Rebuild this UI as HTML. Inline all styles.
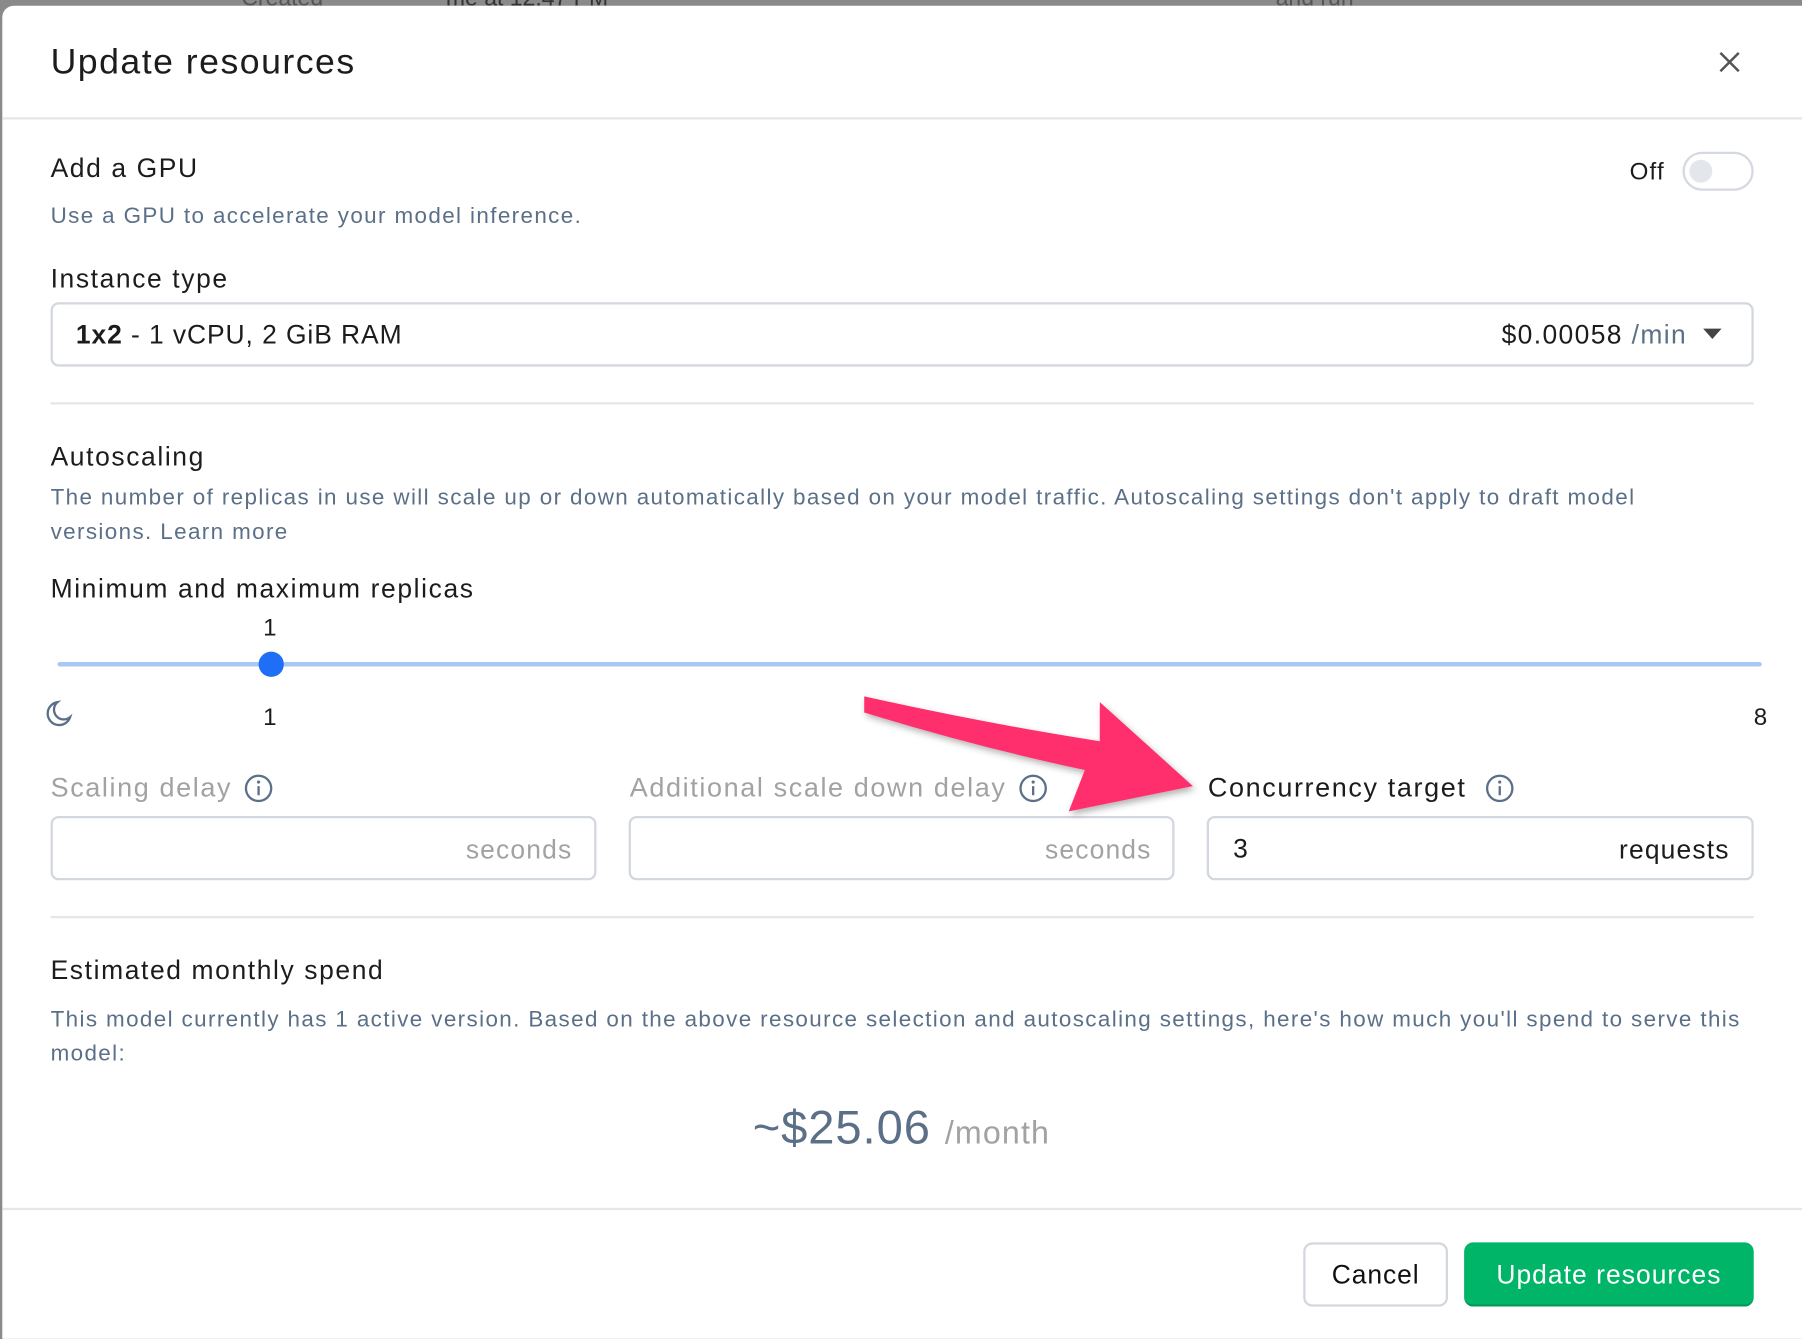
<!DOCTYPE html>
<html><head><meta charset="utf-8"><style>
html,body{margin:0;padding:0;width:1802px;height:1320px;overflow:hidden;background:#8a8a8a;font-family:"Liberation Sans",sans-serif;}
#w{position:absolute;left:0;top:0;width:1568px;height:1149px;transform:scale(1.14923);transform-origin:0 0;}
.a{position:absolute;white-space:nowrap;}
.modal{position:absolute;left:2px;top:5px;width:1580px;height:1160px;background:#fff;border-radius:10px 0 0 0;}
.hr{position:absolute;height:2px;background:#e6e6e6;}
.h{font-size:23px;color:#1c1c1c;letter-spacing:1.4px;}
.d{font-size:19.5px;color:#5b7088;letter-spacing:1.2px;}
.box{position:absolute;border:2px solid #d3d7de;border-radius:7px;box-sizing:border-box;background:#fff;}
.lab{font-size:23.5px;letter-spacing:1.4px;}
</style></head><body><div id="w">
<div class="a" style="left:210px;top:-12px;font-size:20px;color:#555">Created</div>
<div class="a" style="left:388px;top:-12px;font-size:20px;color:#333">me at 12:47 PM</div>
<div class="a" style="left:1110px;top:-12px;font-size:20px;color:#555">and run</div>
<div class="modal"></div>
<div class="a" style="left:44px;top:36px;font-size:31px;color:#1c1c1c;letter-spacing:1.3px">Update resources</div>
<svg class="a" style="left:1494px;top:43px" width="22" height="22" viewBox="0 0 22 22"><path d="M3 3L19 19M19 3L3 19" stroke="#555" stroke-width="2.2"/></svg>
<div class="hr" style="left:2px;top:102px;width:1566px"></div>
<div class="a h" style="left:44px;top:133px">Add a GPU</div>
<div class="a" style="left:1418px;top:138px;font-size:21px;color:#1c1c1c;letter-spacing:1px">Off</div>
<div class="a" style="left:1464px;top:132px;width:58px;height:30px;border:2px solid #d5d9e0;border-radius:17px"></div>
<div class="a" style="left:1470px;top:139px;width:20px;height:20px;border-radius:50%;background:#e3e6eb"></div>
<div class="a d" style="left:44px;top:177px">Use a GPU to accelerate your model inference.</div>
<div class="a h" style="left:44px;top:229px">Instance type</div>
<div class="box" style="left:44px;top:263px;width:1482px;height:56px"></div>
<div class="a" style="left:66px;top:278px;font-size:23px;color:#1c1c1c;letter-spacing:0.8px"><b>1x2</b> - 1 vCPU, 2 GiB RAM</div>
<div class="a" style="right:100px;top:278px;font-size:23px;color:#1c1c1c;letter-spacing:1.2px">$0.00058 <span style="color:#5b7088">/min</span></div>
<svg class="a" style="left:1481px;top:285px" width="18" height="12"><path d="M1 1L17 1L9 10Z" fill="#444"/></svg>
<div class="hr" style="left:44px;top:350px;width:1482px"></div>
<div class="a h" style="left:44px;top:384px">Autoscaling</div>
<div class="a d" style="left:44px;top:418px;line-height:30px">The number of replicas in use will scale up or down automatically based on your model traffic. Autoscaling settings don't apply to draft model<br>versions. Learn more</div>
<div class="a h" style="left:44px;top:499px">Minimum and maximum replicas</div>
<div class="a" style="left:229px;top:535px;font-size:21px;color:#1c1c1c">1</div>
<div class="a" style="left:50px;top:576px;width:1483px;height:4px;border-radius:2px;background:#aac6f6"></div>
<div class="a" style="left:225px;top:567px;width:22px;height:22px;border-radius:50%;background:#1e6ff5"></div>
<svg class="a" style="left:38px;top:608px" width="26" height="26" viewBox="0 0 26 26"><path d="M12 3A10 10 0 1 0 23 16A8 8 0 0 1 12 3Z" fill="none" stroke="#5b7088" stroke-width="2"/></svg>
<div class="a" style="left:229px;top:613px;font-size:21px;color:#1c1c1c">1</div>
<div class="a" style="left:1526px;top:613px;font-size:21px;color:#1c1c1c">8</div>
<div class="a lab" style="left:44px;top:672px;color:#a2a2a2">Scaling delay</div>
<div class="a lab" style="left:548px;top:672px;color:#a2a2a2">Additional scale down delay</div>
<div class="a lab" style="left:1051px;top:672px;color:#1c1c1c">Concurrency target</div>
<svg class="a" style="left:212px;top:673px" width="26" height="26" viewBox="0 0 26 26"><circle cx="13" cy="13" r="11" fill="none" stroke="#5b7088" stroke-width="2"/><path d="M13 11V19" stroke="#5b7088" stroke-width="2"/><circle cx="13" cy="7.5" r="1.4" fill="#5b7088"/></svg>
<svg class="a" style="left:886px;top:673px" width="26" height="26" viewBox="0 0 26 26"><circle cx="13" cy="13" r="11" fill="none" stroke="#5b7088" stroke-width="2"/><path d="M13 11V19" stroke="#5b7088" stroke-width="2"/><circle cx="13" cy="7.5" r="1.4" fill="#5b7088"/></svg>
<svg class="a" style="left:1292px;top:673px" width="26" height="26" viewBox="0 0 26 26"><circle cx="13" cy="13" r="11" fill="none" stroke="#5b7088" stroke-width="2"/><path d="M13 11V19" stroke="#5b7088" stroke-width="2"/><circle cx="13" cy="7.5" r="1.4" fill="#5b7088"/></svg>
<div class="box" style="left:44px;top:710px;width:475px;height:56px"></div>
<div class="box" style="left:547px;top:710px;width:475px;height:56px"></div>
<div class="box" style="left:1050px;top:710px;width:476px;height:56px"></div>
<div class="a" style="right:1070px;top:726px;font-size:23px;color:#a2a2a2;letter-spacing:1px">seconds</div>
<div class="a" style="right:566px;top:726px;font-size:23px;color:#a2a2a2;letter-spacing:1px">seconds</div>
<div class="a" style="left:1073px;top:725px;font-size:23px;color:#1c1c1c">3</div>
<div class="a" style="right:63px;top:726px;font-size:23px;color:#1c1c1c;letter-spacing:1px">requests</div>
<svg class="a" style="left:0;top:0" width="1568" height="1149"><defs><filter id="s"><feDropShadow dx="2" dy="3" stdDeviation="3" flood-opacity="0.3"/></filter></defs>
<path d="M752,606 Q860,630 957,645 L957,611 L1038,684 L930,706 L944,670 Q850,650 752,620 Z" fill="#ff2d6c" filter="url(#s)"/></svg>
<div class="hr" style="left:44px;top:797px;width:1482px"></div>
<div class="a h" style="left:44px;top:831px">Estimated monthly spend</div>
<div class="a d" style="left:44px;top:872px;line-height:30px">This model currently has 1 active version. Based on the above resource selection and autoscaling settings, here's how much you'll spend to serve this<br>model:</div>
<div class="a" style="left:655px;top:958px;font-size:41px;color:#5b7088;letter-spacing:0.8px">~$25.06 <span style="font-size:28px;color:#a2a2a2;letter-spacing:1px">/month</span></div>
<div class="hr" style="left:2px;top:1051px;width:1566px"></div>
<div class="a" style="left:1134px;top:1081px;width:126px;height:56px;border:2px solid #d3d7de;border-radius:8px;box-sizing:border-box;font-size:23px;color:#111;text-align:center;line-height:52px;letter-spacing:0.8px">Cancel</div>
<div class="a" style="left:1274px;top:1081px;width:252px;height:56px;background:#00b567;border-radius:8px;font-size:23px;color:#fff;text-align:center;line-height:56px;border-bottom:2px solid #009a57;box-sizing:border-box;letter-spacing:0.9px">Update resources</div>
</div></body></html>
